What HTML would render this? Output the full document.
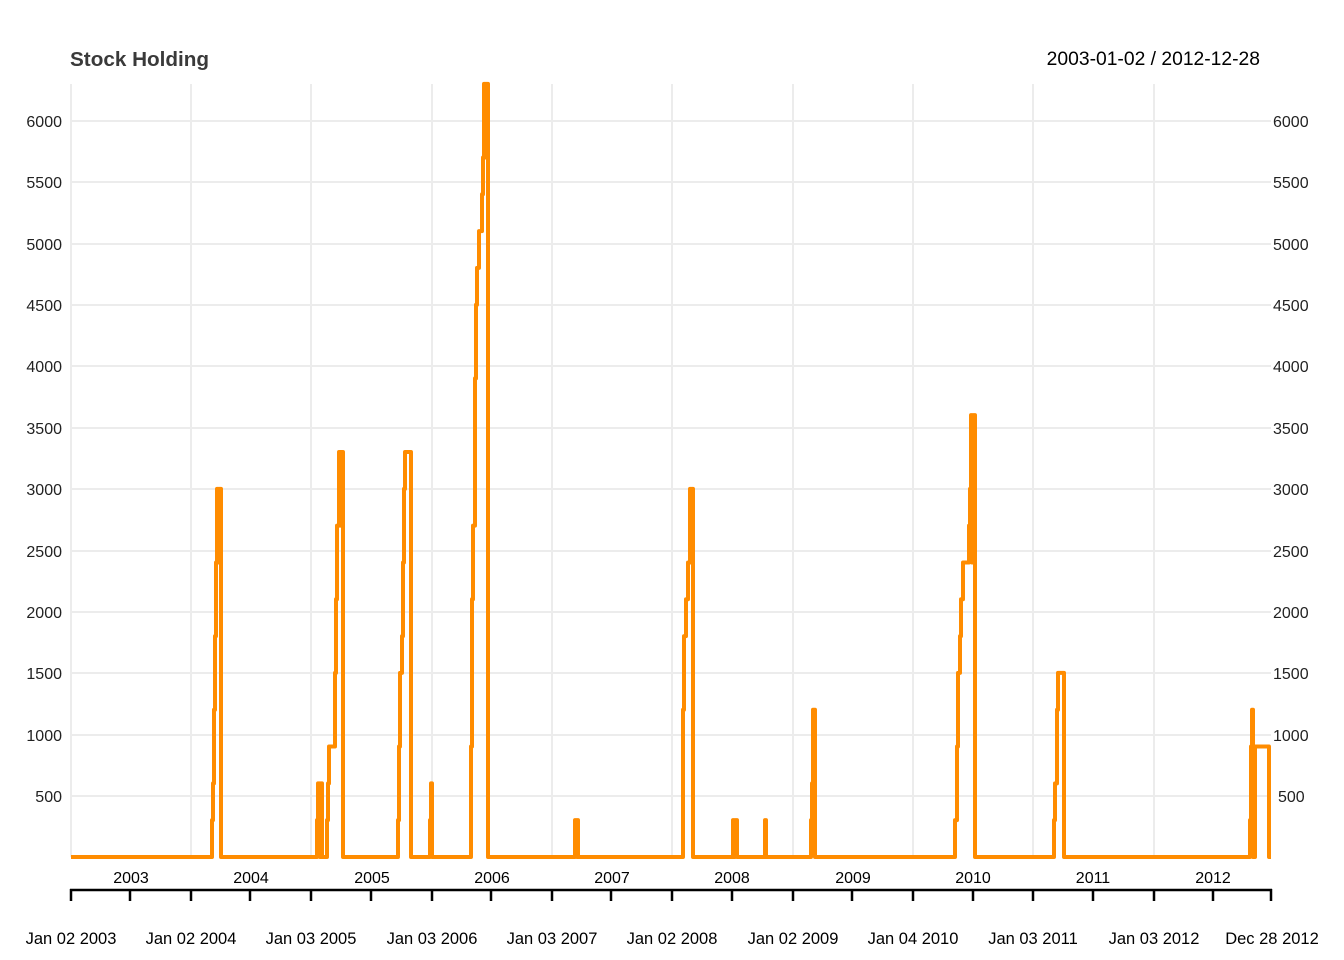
<!DOCTYPE html>
<html><head><meta charset="utf-8"><style>
html,body{margin:0;padding:0;background:#fff;}
svg{display:block;}
text{font-family:"Liberation Sans",Arial,sans-serif;}
</style></head><body>
<svg width="1344" height="960" viewBox="0 0 1344 960" xmlns="http://www.w3.org/2000/svg">
<g stroke="#ececec" stroke-width="2">
<line x1="71" y1="796" x2="1271" y2="796"/>
<line x1="71" y1="735" x2="1271" y2="735"/>
<line x1="71" y1="673" x2="1271" y2="673"/>
<line x1="71" y1="612" x2="1271" y2="612"/>
<line x1="71" y1="551" x2="1271" y2="551"/>
<line x1="71" y1="489" x2="1271" y2="489"/>
<line x1="71" y1="428" x2="1271" y2="428"/>
<line x1="71" y1="366" x2="1271" y2="366"/>
<line x1="71" y1="305" x2="1271" y2="305"/>
<line x1="71" y1="244" x2="1271" y2="244"/>
<line x1="71" y1="182" x2="1271" y2="182"/>
<line x1="71" y1="121" x2="1271" y2="121"/>
<line x1="71" y1="84" x2="71" y2="857"/>
<line x1="191" y1="84" x2="191" y2="857"/>
<line x1="311" y1="84" x2="311" y2="857"/>
<line x1="432" y1="84" x2="432" y2="857"/>
<line x1="552" y1="84" x2="552" y2="857"/>
<line x1="672" y1="84" x2="672" y2="857"/>
<line x1="793" y1="84" x2="793" y2="857"/>
<line x1="913" y1="84" x2="913" y2="857"/>
<line x1="1033" y1="84" x2="1033" y2="857"/>
<line x1="1154" y1="84" x2="1154" y2="857"/>
</g>
<text x="70" y="66" font-size="20.7" font-weight="bold" fill="#3a3a3a">Stock Holding</text>
<text x="1260" y="65" font-size="19.3" text-anchor="end" fill="#000">2003-01-02 / 2012-12-28</text>
<g font-size="16" fill="#222" text-anchor="end">
<text x="62" y="802">500</text><text x="62" y="741">1000</text><text x="62" y="679">1500</text><text x="62" y="618">2000</text><text x="62" y="557">2500</text><text x="62" y="495">3000</text><text x="62" y="434">3500</text><text x="62" y="372">4000</text><text x="62" y="311">4500</text><text x="62" y="250">5000</text><text x="62" y="188">5500</text><text x="62" y="127">6000</text>
</g>
<g font-size="16" fill="#222" text-anchor="start">
<text x="1278" y="802">500</text><text x="1273" y="741">1000</text><text x="1273" y="679">1500</text><text x="1273" y="618">2000</text><text x="1273" y="557">2500</text><text x="1273" y="495">3000</text><text x="1273" y="434">3500</text><text x="1273" y="372">4000</text><text x="1273" y="311">4500</text><text x="1273" y="250">5000</text><text x="1273" y="188">5500</text><text x="1273" y="127">6000</text>
</g>
<g transform="translate(0,857) scale(1,-0.122727)">
<path fill="none" stroke="#ff8c00" stroke-width="4" vector-effect="non-scaling-stroke" stroke-linejoin="round" d="M71 0 H212 V300 H213 V600 H214 V1200 H215 V1800 H216 V2400 H217 V3000 H218 V2400 H219 V3000 H221 V0 H317 V300 H318 V600 H320 V0 H321 V600 H322 V0 H327 V300 H328 V600 H329 V900 H335 V1500 H336 V2100 H337 V2700 H339 V3300 H340 V2700 H341 V3300 H343 V0 H398 V300 H399 V900 H400 V1500 H402 V1800 H403 V2400 H404 V3000 H405 V3300 H411 V0 H430 V300 H431 V600 H432 V0 H471 V900 H472 V2100 H473 V2700 H475 V3900 H476 V4500 H477 V4800 H479 V5100 H482 V5400 H483 V5700 H484 V6300 H485 V5700 H486 V6300 H487 V5700 H488 V6300 H488 V0 H575 V300 H577 V0 H577 V300 H578 V0 H683 V1200 H684 V1800 H686 V2100 H688 V2400 H690 V3000 H691 V2400 H692 V3000 H693 V0 H733 V300 H734 V0 H735 V300 H737 V0 H765 V300 H766 V0 H811 V300 H812 V600 H813 V1200 H815 V0 H955 V300 H957 V900 H958 V1500 H960 V1800 H961 V2100 H963 V2400 H969 V2700 H970 V3000 H971 V3600 H972 V2400 H973 V3600 H975 V0 H1054 V300 H1055 V600 H1057 V1200 H1058 V1500 H1064 V0 H1250 V300 H1251 V900 H1252 V1200 H1253 V0 H1255 V900 H1269 V0 H1271"/>
</g>
<g font-size="16" fill="#000" text-anchor="middle">
<text x="131" y="883">2003</text><text x="251" y="883">2004</text><text x="372" y="883">2005</text><text x="492" y="883">2006</text><text x="612" y="883">2007</text><text x="732" y="883">2008</text><text x="853" y="883">2009</text><text x="973" y="883">2010</text><text x="1093" y="883">2011</text><text x="1213" y="883">2012</text>
</g>
<g stroke="#000" stroke-width="2.5" fill="none">
<line x1="70" y1="890" x2="1272" y2="890"/>
<path d="M71 889V901M130 889V901M191 889V901M250 889V901M311 889V901M371 889V901M432 889V901M491 889V901M552 889V901M611 889V901M672 889V901M732 889V901M793 889V901M852 889V901M913 889V901M973 889V901M1033 889V901M1093 889V901M1154 889V901M1213 889V901M1271 889V901"/>
</g>
<g font-size="16.5" fill="#000" text-anchor="middle">
<text x="71" y="944">Jan 02 2003</text><text x="191" y="944">Jan 02 2004</text><text x="311" y="944">Jan 03 2005</text><text x="432" y="944">Jan 03 2006</text><text x="552" y="944">Jan 03 2007</text><text x="672" y="944">Jan 02 2008</text><text x="793" y="944">Jan 02 2009</text><text x="913" y="944">Jan 04 2010</text><text x="1033" y="944">Jan 03 2011</text><text x="1154" y="944">Jan 03 2012</text><text x="1272" y="944">Dec 28 2012</text>
</g>
</svg>
</body></html>
